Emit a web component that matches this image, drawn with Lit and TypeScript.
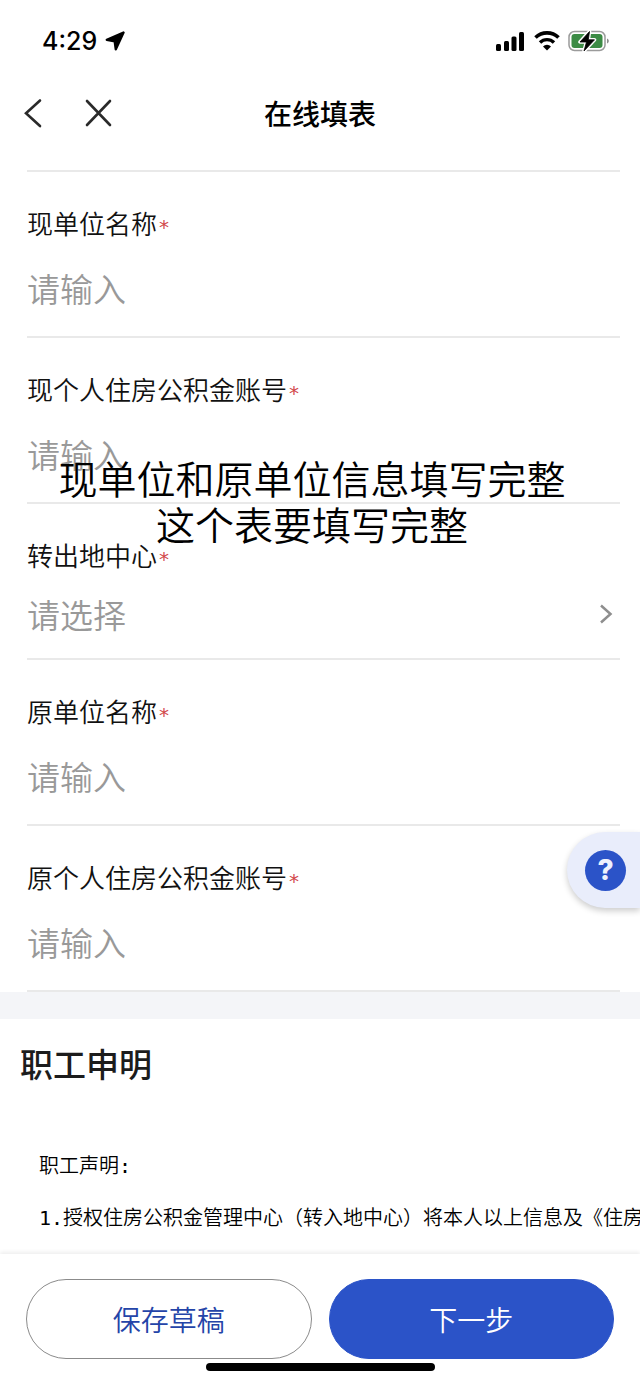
import { LitElement, html, css } from "lit";
import { customElement, property } from "lit/decorators.js";

@customElement("status-bar")
class StatusBar extends LitElement {
  static styles = css`
    :host {
      display: flex;
      justify-content: space-between;
      align-items: center;
      height: 82px;
      padding: 0 30px 0 42px;
      box-sizing: border-box;
    }
    .side {
      display: flex;
      align-items: center;
      gap: 8px;
    }
    .time {
      font: 500 25px/32px Inter, sans-serif;
      color: #000;
    }
    svg {
      display: block;
    }
  `;

  render() {
    return html`
      <div class="side">
        <span class="time">4:29</span>
        <svg width="20" height="20" viewBox="0 0 20 20" aria-hidden="true">
          <path d="M18.500 1.500 1.800 8.800 9.700 10.300 10.800 18.300z" fill="#000" stroke="#000" stroke-width="2.400" stroke-linejoin="round" />
        </svg>
      </div>
      <div class="side">
        <svg width="30" height="20" viewBox="0 0 30 20" aria-hidden="true">
          <rect x="0" y="13" width="5" height="7" rx="1.500" />
          <rect x="8" y="10" width="5" height="10" rx="1.500" />
          <rect x="15.500" y="5.500" width="5" height="14.500" rx="1.500" />
          <rect x="23" y="1" width="5" height="19" rx="1.500" />
        </svg>
        <svg width="26" height="20" viewBox="0 0 26 20" aria-hidden="true">
          <path d="M1.500 6.500a16.500 16.500 0 0 1 23 0" fill="none" stroke="#000" stroke-width="3.600" />
          <path d="M6 11.500a10 10 0 0 1 14 0" fill="none" stroke="#000" stroke-width="3.400" />
          <path d="M13 19.500 9 15.500a5.700 5.700 0 0 1 8 0z" />
        </svg>
        <svg width="42" height="22" viewBox="0 0 42 22" aria-hidden="true">
          <rect x="1" y="1.500" width="36" height="19" rx="5.500" fill="#fff" stroke="#9b9b9b" stroke-width="1.500" />
          <rect x="3.500" y="4" width="31" height="14" rx="3" fill="#3c8b45" />
          <path d="M39 8.500v5c2.400-.8 2.400-4.200 0-5z" fill="#8d8d8d" />
          <path d="M21.500 1.500 12 12h6.500l-2.500 9L26.500 9.800H20.300z" fill="#fff" stroke="#fff" stroke-width="3.600" stroke-linejoin="round" />
          <path d="M21.500 1.500 12 12h6.500l-2.500 9L26.500 9.800H20.300z" fill="#000" stroke="#000" stroke-width=".8" stroke-linejoin="round" />
        </svg>
      </div>
    `;
  }
}

@customElement("form-field")
class FormField extends LitElement {
  @property() label = "";
  @property() kind: "input" | "select" = "input";

  static styles = css`
    :host {
      display: block;
      border-bottom: 2px solid #e9e9e9;
      padding: 33px 0 22px;
    }
    :host([kind="select"]) {
      padding-bottom: 18px;
    }
    .label {
      display: flex;
      align-items: center;
      gap: 2px;
      font-size: 26px;
      font-weight: 350;
      line-height: 36px;
      color: #111;
    }
    .star {
      font: 20px/28px "DejaVu Sans", sans-serif;
      color: #d2484b;
      padding-top: 8px;
      height: 28px;
    }
    .box {
      display: flex;
      align-items: center;
      margin-top: 21px;
    }
    :host([kind="select"]) .box {
      margin-top: 15px;
    }
    .control {
      flex: 1;
      min-width: 0;
      height: 52px;
      margin: 0;
      padding: 0;
      border: 0;
      outline: none;
      background: none;
      appearance: none;
      font: inherit;
      font-weight: 350;
      font-size: 33px;
      line-height: 52px;
      color: #111;
    }
    select.control,
    .control::placeholder {
      color: #999;
      opacity: 1;
    }
    svg {
      display: block;
      flex: none;
      margin-right: 7px;
    }
  `;

  render() {
    return html`
      <label class="label" for="control">
        <span>${this.label}</span><span class="star">*</span>
      </label>
      <div class="box">
        ${this.kind === "select"
          ? html`
              <select class="control" id="control" required>
                <option value="">请选择</option>
              </select>
              <svg width="14" height="20" viewBox="0 0 14 20" fill="none" aria-hidden="true">
                <path d="m2 1.500 9.500 8.500L2 18.500" stroke="#8e8e8e" stroke-width="2.500" />
              </svg>
            `
          : html`<input class="control" id="control" type="text" placeholder="请输入" required />`}
      </div>
    `;
  }
}

@customElement("app-root")
class AppRoot extends LitElement {
  static styles = css`
    :host {
      display: flex;
      flex-direction: column;
      position: relative;
      min-height: 100vh;
      overflow: hidden;
      background: #fff;
      color: #1c1c1c;
      font-family: "Noto Sans CJK SC", sans-serif;
    }
    button {
      margin: 0;
      padding: 0;
      border: 0;
      background: none;
      font: inherit;
      color: inherit;
      cursor: pointer;
    }
    svg {
      display: block;
    }
    .nav {
      display: grid;
      grid-template-columns: 1fr auto 1fr;
      align-items: center;
      height: 62px;
    }
    .tools {
      display: flex;
      gap: 40px;
      padding-left: 23px;
    }
    .title {
      margin: 0;
      font-size: 28px;
      line-height: 40px;
      font-weight: 500;
      color: #000;
    }
    .form {
      margin: 26px 20px 0 27px;
      border-top: 2px solid #e9e9e9;
    }
    .divider {
      height: 27px;
      background: #f4f5f8;
    }
    .statement {
      flex: 1;
      padding: 20px 0 0 20px;
    }
    .heading {
      margin: 0;
      font-size: 33px;
      line-height: 48px;
      font-weight: 500;
    }
    .terms {
      margin: 53px 0 0 19px;
      font: 350 20px/52px "DejaVu Sans Mono", "Noto Sans CJK SC", monospace;
      color: #000;
      overflow: hidden;
    }
    .footer {
      position: relative;
      padding: 25px 26px 14px;
      background: #fff;
      box-shadow: 0 -2px 4px rgba(0, 0, 0, 0.07);
    }
    .actions {
      display: grid;
      grid-template-columns: 1fr 1fr;
      gap: 17px;
    }
    .action {
      height: 80px;
      border: 1px solid #8b8b8b;
      border-radius: 40px;
      font-size: 28px;
      font-weight: 350;
      line-height: 40px;
      color: #2444a8;
    }
    .primary {
      border-color: #2b53c8;
      background: #2b53c8;
      color: #fff;
    }
    .home {
      width: 229px;
      height: 8px;
      margin: 4px auto 0;
      border-radius: 4px;
      background: #000;
    }
    .caption {
      position: absolute;
      top: 454px;
      left: 0;
      right: 16px;
      margin: 0;
      text-align: center;
      font-size: 39px;
      font-weight: 350;
      line-height: 46px;
      color: #000;
      pointer-events: none;
    }
    .help {
      position: absolute;
      top: 832px;
      right: 0;
      display: flex;
      align-items: center;
      width: 73px;
      height: 76px;
      padding-left: 18px;
      box-sizing: border-box;
      border-radius: 38px 0 0 38px;
      background: #e9edfb;
      box-shadow: 0 3px 6px rgba(0, 0, 0, 0.2);
    }
    .mark {
      width: 41px;
      height: 41px;
      border-radius: 50%;
      background: #2b53c8;
      color: #eef1fd;
      font: 800 28px/41px Inter, sans-serif;
      text-align: center;
    }
  `;

  render() {
    return html`
      <status-bar></status-bar>
      <header class="nav">
        <div class="tools">
          <button aria-label="返回">
            <svg width="20" height="30" viewBox="0 0 20 30" fill="none">
              <path d="M17 2.500 3 15.200 17 28" stroke="#2a2a2a" stroke-width="2.600" stroke-linecap="round" />
            </svg>
          </button>
          <button aria-label="关闭">
            <svg width="30" height="30" viewBox="0 0 30 30" fill="none">
              <path d="m4 3 23 24M27 3 4 27" stroke="#2a2a2a" stroke-width="2.600" stroke-linecap="round" />
            </svg>
          </button>
        </div>
        <h1 class="title">在线填表</h1>
      </header>
      <form class="form">
        <form-field kind="input" label="现单位名称"></form-field>
        <form-field kind="input" label="现个人住房公积金账号"></form-field>
        <form-field kind="select" label="转出地中心"></form-field>
        <form-field kind="input" label="原单位名称"></form-field>
        <form-field kind="input" label="原个人住房公积金账号"></form-field>
      </form>
      <div class="divider"></div>
      <section class="statement">
        <h2 class="heading">职工申明</h2>
        <pre class="terms">职工声明:
1.授权住房公积金管理中心（转入地中心）将本人以上信息及《住房公</pre>
      </section>
      <footer class="footer">
        <div class="actions">
          <button class="action">保存草稿</button>
          <button class="action primary">下一步</button>
        </div>
        <div class="home"></div>
      </footer>
      <p class="caption">现单位和原单位信息填写完整<br />这个表要填写完整</p>
      <button class="help" aria-label="帮助"><span class="mark">?</span></button>
    `;
  }
}
